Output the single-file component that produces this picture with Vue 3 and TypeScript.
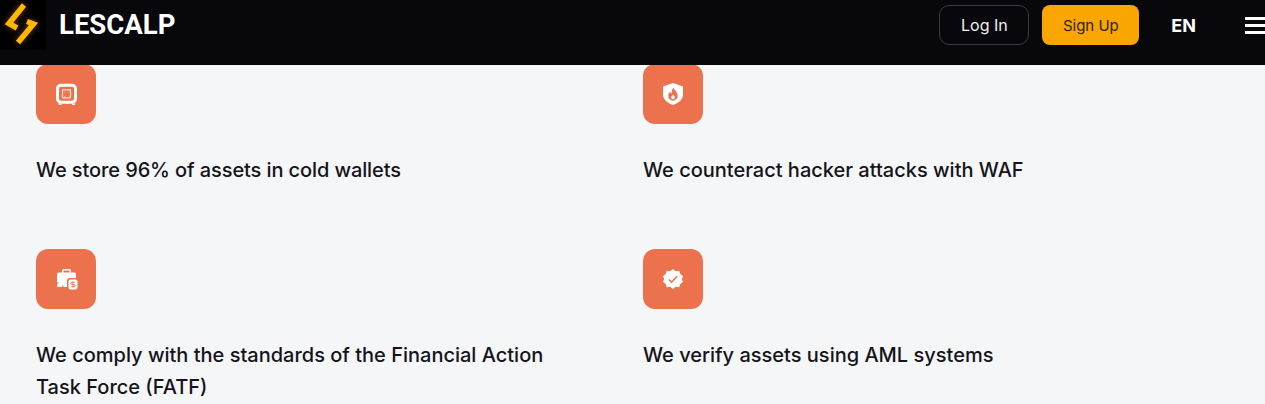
<script setup lang="ts">
interface Feature {
  id: string;
  text: string;
}

const features: Feature[] = [
  { id: 'safe', text: 'We store 96% of assets in cold wallets' },
  { id: 'shield', text: 'We counteract hacker attacks with WAF' },
  { id: 'case', text: 'We comply with the standards of the Financial Action Task Force (FATF)' },
  { id: 'badge', text: 'We verify assets using AML systems' },
];
</script>

<template>
  <div class="page">
    <header class="topbar">
      <div class="brand">
        <div class="logo">
          <svg width="46" height="50" viewBox="0 0 46 50">
            <g fill="none" stroke="#ffb800" stroke-width="5.5" stroke-linejoin="miter">
              <path d="M24 5 L9 23.500 L17 28" />
              <path d="M27 21.500 L33.500 24 L18 42.500" />
            </g>
          </svg>
        </div>
        <span class="brand-name">LESCALP</span>
      </div>
      <div class="actions">
        <button class="btn login">Log In</button>
        <button class="btn signup">Sign Up</button>
        <span class="lang">EN</span>
        <div class="burger"><i></i><i></i><i></i></div>
      </div>
    </header>

    <main class="features">
      <div v-for="f in features" :key="f.id" class="feature">
        <div class="icon-box">
          <svg v-if="f.id === 'safe'" width="24" height="24" viewBox="0 0 24 24">
            <rect x="3.500" y="3.300" width="18" height="17" rx="3.500" fill="none" stroke="#fff" stroke-width="3" />
            <rect x="8.500" y="7.800" width="8" height="8" rx="0.500" fill="none" stroke="#fff" stroke-width="1.200" opacity="0.8" />
            <path d="M10.500 9.800l1 1M15.500 9.800l-1 1M10.500 14.800l1-1M15.500 14.800l-1-1" stroke="#fff" stroke-width="0.800" opacity="0.7" />
            <path d="M4 21.500h3.500v1.500H5zM18 21.500h3.500l-1 1.500H18z" fill="#fff" />
          </svg>
          <svg v-else-if="f.id === 'shield'" width="24" height="24" viewBox="0 0 24 24">
            <path d="M12 1 22 4.500v8c0 5-4.500 8.500-10 10.500C6.500 21 2 17.500 2 12.500v-8z" fill="#fff" />
            <path d="M12.500 5.500c.5 2.500 4.200 4.200 4.200 8.500a4.700 4.700 0 0 1-9.400 0c0-2 1-3.200 1.800-4.200.3 1 .8 1.500 1.500 1.800C10.500 9.500 11 7.500 12.500 5.500z" fill="#ec724d" />
            <path d="M12 12.500c.4 1 1.800 1.500 1.800 3a1.800 1.800 0 0 1-3.600 0c0-1.200 1.300-1.800 1.800-3z" fill="#fff" />
          </svg>
          <svg v-else-if="f.id === 'case'" width="24" height="24" viewBox="0 0 24 24">
            <path d="M8 6V3.500A1.500 1.500 0 0 1 9.500 2h6A1.500 1.500 0 0 1 17 3.500V6h-1.600V3.600H9.600V6z" fill="#fff" />
            <path d="M3 7a1.500 1.500 0 0 1 1.500-1.500h16A1.500 1.500 0 0 1 22 7v13H4.500A1.500 1.500 0 0 1 3 18.500z" fill="#fff" />
            <path d="M3 15.500h1.200v1.500H3zM8 18.800h1.500V20H8z" fill="#ec724d" />
            <rect x="13" y="11" width="11.500" height="13" rx="2.500" fill="#ec724d" />
            <rect x="14.500" y="12.500" width="9" height="10" rx="2" fill="#fff" />
            <path d="M20.800 15.300h-2.800a1.100 1.100 0 0 0 0 2.200h2a1.100 1.100 0 0 1 0 2.200h-2.800M19 14.500v6" fill="none" stroke="#ec724d" stroke-width="0.900" />
          </svg>
          <svg v-else width="22" height="22" viewBox="0 0 24 24">
            <path d="M12 1l3 2.500 3.800-.6 1.200 3.700 3 2.400-1.400 3 1.400 3-3 2.400-1.200 3.700-3.800-.6-3 2.500-3-2.500-3.800.6-1.200-3.700-3-2.400 1.400-3-1.400-3 3-2.400 1.200-3.700 3.800.6z" fill="#fff" />
            <path d="M7.500 12.500l3 3 6-6.500" fill="none" stroke="#ec724d" stroke-width="1.700" />
          </svg>
        </div>
        <p class="feature-text">{{ f.text }}</p>
      </div>
    </main>
  </div>
</template>

<style>
html,
body {
  margin: 0;
  overflow: hidden;
  background: #f5f6f8;
}
</style>

<style scoped>
.page {
  font-family: Inter, sans-serif;
  background: #f5f6f8;
  height: 404px;
  overflow: hidden;
}

.topbar {
  position: fixed;
  top: 0;
  left: 0;
  right: 0;
  height: 65px;
  background: #07070c;
  display: flex;
  justify-content: space-between;
  align-items: flex-start;
  z-index: 10;
}

.brand {
  display: flex;
  align-items: center;
  height: 48px;
  gap: 13px;
}

.logo {
  width: 46px;
  height: 50px;
  background: #000;
  align-self: flex-start;
}

.logo svg {
  display: block;
  filter: drop-shadow(0 0 3px rgba(200, 120, 0, 0.55));
}

.brand-name {
  font-family: Roboto, sans-serif;
  font-weight: 700;
  font-size: 27.5px;
  color: #fff;
}

.actions {
  display: flex;
  align-items: center;
  height: 50px;
}

.btn {
  height: 40px;
  border-radius: 8px;
  font-family: Inter, sans-serif;
  font-size: 16px;
  font-weight: 400;
  box-sizing: border-box;
}

.login {
  width: 90px;
  background: transparent;
  border: 1px solid #3a3a42;
  border-radius: 10px;
  color: #f0f0f0;
  margin-right: 13px;
}

.signup {
  width: 97px;
  background: #f9a600;
  border: none;
  color: #2c2208;
  font-size: 15px;
}

.lang {
  margin-left: 32px;
  font-size: 18px;
  font-weight: 700;
  color: #fff;
}

.burger {
  margin-left: 49px;
  width: 20px;
  display: flex;
  flex-direction: column;
  gap: 4px;
}

.burger i {
  display: block;
  height: 3px;
  background: #fff;
}

.features {
  display: grid;
  grid-template-columns: 540px 540px;
  column-gap: 67px;
  row-gap: 63px;
  padding: 64px 0 0 36px;
}

.icon-box {
  width: 60px;
  height: 60px;
  border-radius: 12px;
  background: #ec724d;
  display: flex;
  align-items: center;
  justify-content: center;
}

.feature-text {
  margin: 30px 0 0;
  font-size: 20px;
  font-weight: 500;
  line-height: 32px;
  color: #14141a;
}

.feature:first-child .feature-text {
  letter-spacing: -0.1px;
}
</style>
